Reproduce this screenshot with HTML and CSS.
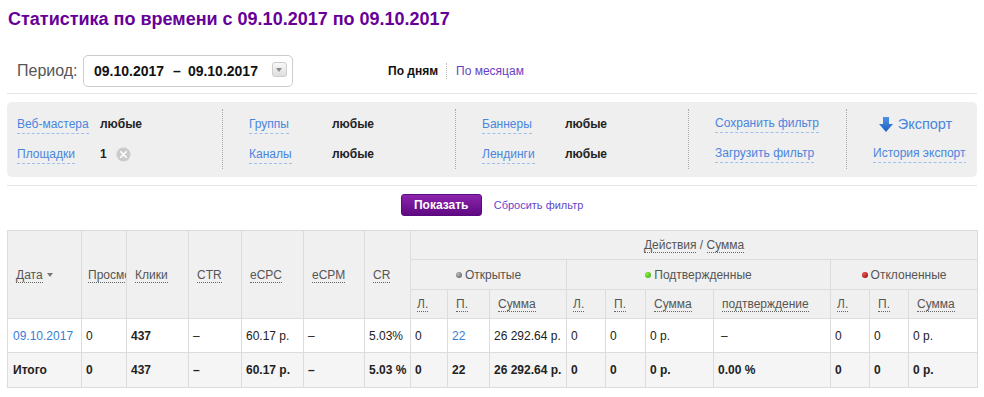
FILE: index.html
```html
<!DOCTYPE html>
<html lang="ru">
<head>
  <meta charset="UTF-8" />
  <title>Статистика по времени</title>
  <link rel="stylesheet" href="styles.css">
</head>
<body>
  <div class="page">
    <h1 class="title">Статистика по времени с 09.10.2017 по 09.10.2017</h1>

    <div class="period">
      <span class="period-label">Период:</span>
      <div class="date-select">
        <span class="date-range">09.10.2017<span class="dash">–</span>09.10.2017</span>
        <span class="date-btn"></span>
      </div>
      <div class="view-switch">
        <span class="view-on">По дням</span>
        <a href="#" class="view-link">По месяцам</a>
      </div>
    </div>

    <div class="filters">
      <div class="fcol">
        <div class="frow"><span class="fname"><a href="#" class="flink">Веб-мастера</a></span><b class="fval">любые</b></div>
        <div class="frow"><span class="fname"><a href="#" class="flink">Площадки</a></span><b class="fval">1</b>
          <svg class="clear" width="15" height="15" viewBox="0 0 15 15"><circle cx="7.5" cy="7.5" r="7" fill="#cbcbcb"/><path d="M4.7 4.7l5.6 5.6M10.3 4.7l-5.6 5.6" stroke="#fff" stroke-width="1.6" stroke-linecap="round"/></svg>
        </div>
      </div>
      <div class="fcol">
        <div class="frow"><span class="fname"><a href="#" class="flink">Группы</a></span><b class="fval">любые</b></div>
        <div class="frow"><span class="fname"><a href="#" class="flink">Каналы</a></span><b class="fval">любые</b></div>
      </div>
      <div class="fcol">
        <div class="frow"><span class="fname"><a href="#" class="flink">Баннеры</a></span><b class="fval">любые</b></div>
        <div class="frow"><span class="fname"><a href="#" class="flink">Лендинги</a></span><b class="fval">любые</b></div>
      </div>
      <div class="fcol">
        <div class="frow"><a href="#" class="flink">Сохранить фильтр</a></div>
        <div class="frow"><a href="#" class="flink">Загрузить фильтр</a></div>
      </div>
      <div class="fcol fcol-last">
        <div class="frow export-row">
          <a href="#" class="export">
            <svg width="14" height="15" viewBox="0 0 14 15"><defs><linearGradient id="ag" x1="0" y1="0" x2="0" y2="1"><stop offset="0" stop-color="#4d92e6"/><stop offset="1" stop-color="#1d5fc2"/></linearGradient></defs><path d="M4 0h6v7h4l-7 8-7-8h4z" fill="url(#ag)"/></svg>
            Экспорт
          </a>
        </div>
        <div class="frow clip-row"><a href="#" class="flink">История экспорта</a></div>
      </div>
    </div>

    <div class="actions">
      <button class="show-btn">Показать</button>
      <a href="#" class="reset-link">Сбросить фильтр</a>
    </div>

    <table class="stats">
      <colgroup>
        <col class="w74"><col class="w45"><col class="w62"><col class="w53"><col class="w62"><col class="w61"><col class="w46">
        <col class="w37"><col class="w42"><col class="w77">
        <col class="w39"><col class="w40"><col class="w68"><col class="w117">
        <col class="w39"><col class="w39"><col class="w69">
      </colgroup>
      <thead>
        <tr class="hrow1">
          <th rowspan="3"><span class="hl">Дата</span><span class="caret"></span></th>
          <th rowspan="3" class="tight"><span class="hl">Просмотры</span></th>
          <th rowspan="3"><span class="hl">Клики</span></th>
          <th rowspan="3"><span class="hl">CTR</span></th>
          <th rowspan="3"><span class="hl">eCPC</span></th>
          <th rowspan="3"><span class="hl">eCPM</span></th>
          <th rowspan="3"><span class="hl">CR</span></th>
          <th colspan="10" class="center"><span class="hl">Действия</span> / <span class="hl">Сумма</span></th>
        </tr>
        <tr class="hrow2">
          <th colspan="3" class="center"><i class="dot grey"></i>Открытые</th>
          <th colspan="4" class="center"><i class="dot green"></i>Подтвержденные</th>
          <th colspan="3" class="center"><i class="dot red"></i>Отклоненные</th>
        </tr>
        <tr class="hrow3">
          <th class="tight"><span class="hl">Л.</span></th>
          <th><span class="hl">П.</span></th>
          <th><span class="hl">Сумма</span></th>
          <th class="tight"><span class="hl">Л.</span></th>
          <th><span class="hl">П.</span></th>
          <th><span class="hl">Сумма</span></th>
          <th><span class="hl">подтверждение</span></th>
          <th class="tight"><span class="hl">Л.</span></th>
          <th><span class="hl">П.</span></th>
          <th><span class="hl">Сумма</span></th>
        </tr>
      </thead>
      <tbody>
        <tr class="data-row">
          <td><a href="#" class="tlink">09.10.2017</a></td>
          <td>0</td>
          <td><b>437</b></td>
          <td>–</td>
          <td>60.17 р.</td>
          <td>–</td>
          <td>5.03%</td>
          <td>0</td>
          <td><a href="#" class="tlink">22</a></td>
          <td>26 292.64 р.</td>
          <td>0</td>
          <td>0</td>
          <td>0 р.</td>
          <td class="wide">–</td>
          <td>0</td>
          <td>0</td>
          <td>0 р.</td>
        </tr>
        <tr class="total-row">
          <td>Итого</td>
          <td>0</td>
          <td>437</td>
          <td>–</td>
          <td>60.17 р.</td>
          <td>–</td>
          <td>5.03 %</td>
          <td>0</td>
          <td>22</td>
          <td>26 292.64 р.</td>
          <td>0</td>
          <td>0</td>
          <td>0 р.</td>
          <td>0.00 %</td>
          <td>0</td>
          <td>0</td>
          <td>0 р.</td>
        </tr>
      </tbody>
    </table>
  </div>
</body>
</html>
```

FILE: styles.css
```css
html, body {
  margin: 0;
  padding: 0;
  background: #fff;
  font-family: "Liberation Sans", Arial, sans-serif;
  color: #222;
}
a {
  text-decoration: none;
}
.page {
  padding: 0 7px;
}
.title {
  margin: 0;
  padding: 8px 0 0 1px;
  font-size: 18px;
  line-height: 22px;
  font-weight: bold;
  color: #660099;
}

/* period */
.period {
  display: flex;
  align-items: center;
  margin-top: 25px;
  padding: 0 0 6px 10px;
  border-bottom: 1px solid #e4e4e4;
}
.period-label {
  font-size: 16px;
  color: #555;
  width: 66px;
}
.date-select {
  display: flex;
  align-items: center;
  justify-content: space-between;
  box-sizing: border-box;
  width: 210px;
  height: 32px;
  padding: 0 5px 0 10px;
  border: 1px solid #ccc;
  border-radius: 5px;
}
.date-range {
  font-size: 14px;
  font-weight: bold;
  color: #111;
}
.dash {
  margin: 0 7px 0 9px;
}
.date-btn {
  position: relative;
  box-sizing: border-box;
  width: 15px;
  height: 15px;
  margin-top: -4px;
  border: 1px solid #cdcdcd;
  border-radius: 3px;
  background: linear-gradient(#f8f8f8, #dedede);
}
.date-btn::after {
  content: "";
  position: absolute;
  left: 3px;
  top: 5px;
  border-left: 3.5px solid transparent;
  border-right: 3.5px solid transparent;
  border-top: 4px solid #8a8a8a;
}
.view-switch {
  display: flex;
  align-items: center;
  margin-left: 95px;
  font-size: 12px;
}
.view-on {
  font-weight: bold;
  color: #111;
}
.view-link {
  margin-left: 8px;
  padding-left: 9px;
  border-left: 1px dotted #bbb;
  color: #6a3ec4;
  line-height: 16px;
}

/* filters */
.filters {
  display: grid;
  grid-template-columns: 215px 233px 233px 158px 1fr;
  margin-top: 8px;
  padding: 7px 0 8px;
  background: #efefef;
  border-radius: 5px;
  font-size: 12px;
}
.fcol {
  padding-left: 26px;
  border-left: 1px dotted #a8a8a8;
}
.fcol:first-child {
  padding-left: 10px;
  border-left: none;
}
.fcol-last {
  padding-right: 11px;
  overflow: hidden;
}
.frow {
  display: flex;
  align-items: center;
  height: 30px;
  white-space: nowrap;
}
.fname {
  width: 83px;
  flex: none;
}
.flink {
  color: #4a86de;
  padding-bottom: 2px;
  border-bottom: 1px dashed #9dc0ee;
}
.fval {
  color: #222;
}
.clear {
  margin-left: 9px;
}
.export-row {
  justify-content: center;
  padding-right: 8px;
}
.export {
  display: flex;
  align-items: center;
  gap: 5px;
  font-size: 14.5px;
  color: #4a86de;
}
.clip-row {
  overflow: hidden;
}

/* actions */
.actions {
  display: flex;
  align-items: center;
  justify-content: center;
  margin-top: 8px;
  padding-top: 8px;
  border-top: 1px solid #e4e4e4;
}
.show-btn {
  width: 81px;
  height: 22px;
  padding: 0;
  border: 1px solid #5b0a7d;
  border-radius: 3px;
  background: linear-gradient(#8c24ac, #5f0a82);
  color: #fff;
  font-family: inherit;
  font-size: 12px;
  font-weight: bold;
  cursor: pointer;
}
.reset-link {
  margin-left: 12px;
  font-size: 11px;
  color: #5f48cc;
}

/* table */
.stats {
  width: 970px;
  margin-top: 14px;
  border-collapse: collapse;
  table-layout: fixed;
  font-size: 12px;
}
.w37 { width: 37px; }
.w39 { width: 39px; }
.w40 { width: 40px; }
.w42 { width: 42px; }
.w45 { width: 45px; }
.w46 { width: 46px; }
.w53 { width: 53px; }
.w61 { width: 61px; }
.w62 { width: 62px; }
.w68 { width: 68px; }
.w69 { width: 69px; }
.w74 { width: 74px; }
.w77 { width: 77px; }
.w117 { width: 117px; }
.stats th, .stats td {
  border: 1px solid #dcdcdc;
  white-space: nowrap;
  overflow: hidden;
  text-align: left;
}
.stats th {
  padding: 0 8px;
  background: #f0f0f0;
  color: #555;
  font-weight: normal;
}
.stats th.tight {
  padding-left: 6px;
}
.stats th.center {
  text-align: center;
}
.hrow1 { height: 29px; }
.hrow2 { height: 30px; }
.hrow3 { height: 29px; }
.hl {
  border-bottom: 1px dotted #666;
}
.caret {
  display: inline-block;
  margin-left: 4px;
  vertical-align: middle;
  border-left: 3.5px solid transparent;
  border-right: 3.5px solid transparent;
  border-top: 4px solid #777;
}
.dot {
  display: inline-block;
  width: 6px;
  height: 6px;
  margin-right: 3px;
  border-radius: 50%;
  vertical-align: 1px;
}
.dot.grey { background: radial-gradient(circle at 35% 35%, #bbb, #555); }
.dot.green { background: radial-gradient(circle at 35% 35%, #8e4, #3a0); }
.dot.red { background: radial-gradient(circle at 35% 35%, #e55, #800); }
.stats td {
  padding: 0 4px;
  color: #222;
}
.stats td:first-child {
  padding-left: 5px;
}
.stats td.wide {
  padding-left: 7px;
}
.data-row {
  height: 34px;
  background: #fff;
}
.total-row {
  height: 35px;
  background: #f5f5f5;
  font-weight: bold;
}
.tlink {
  color: #3a7ed8;
}
```
